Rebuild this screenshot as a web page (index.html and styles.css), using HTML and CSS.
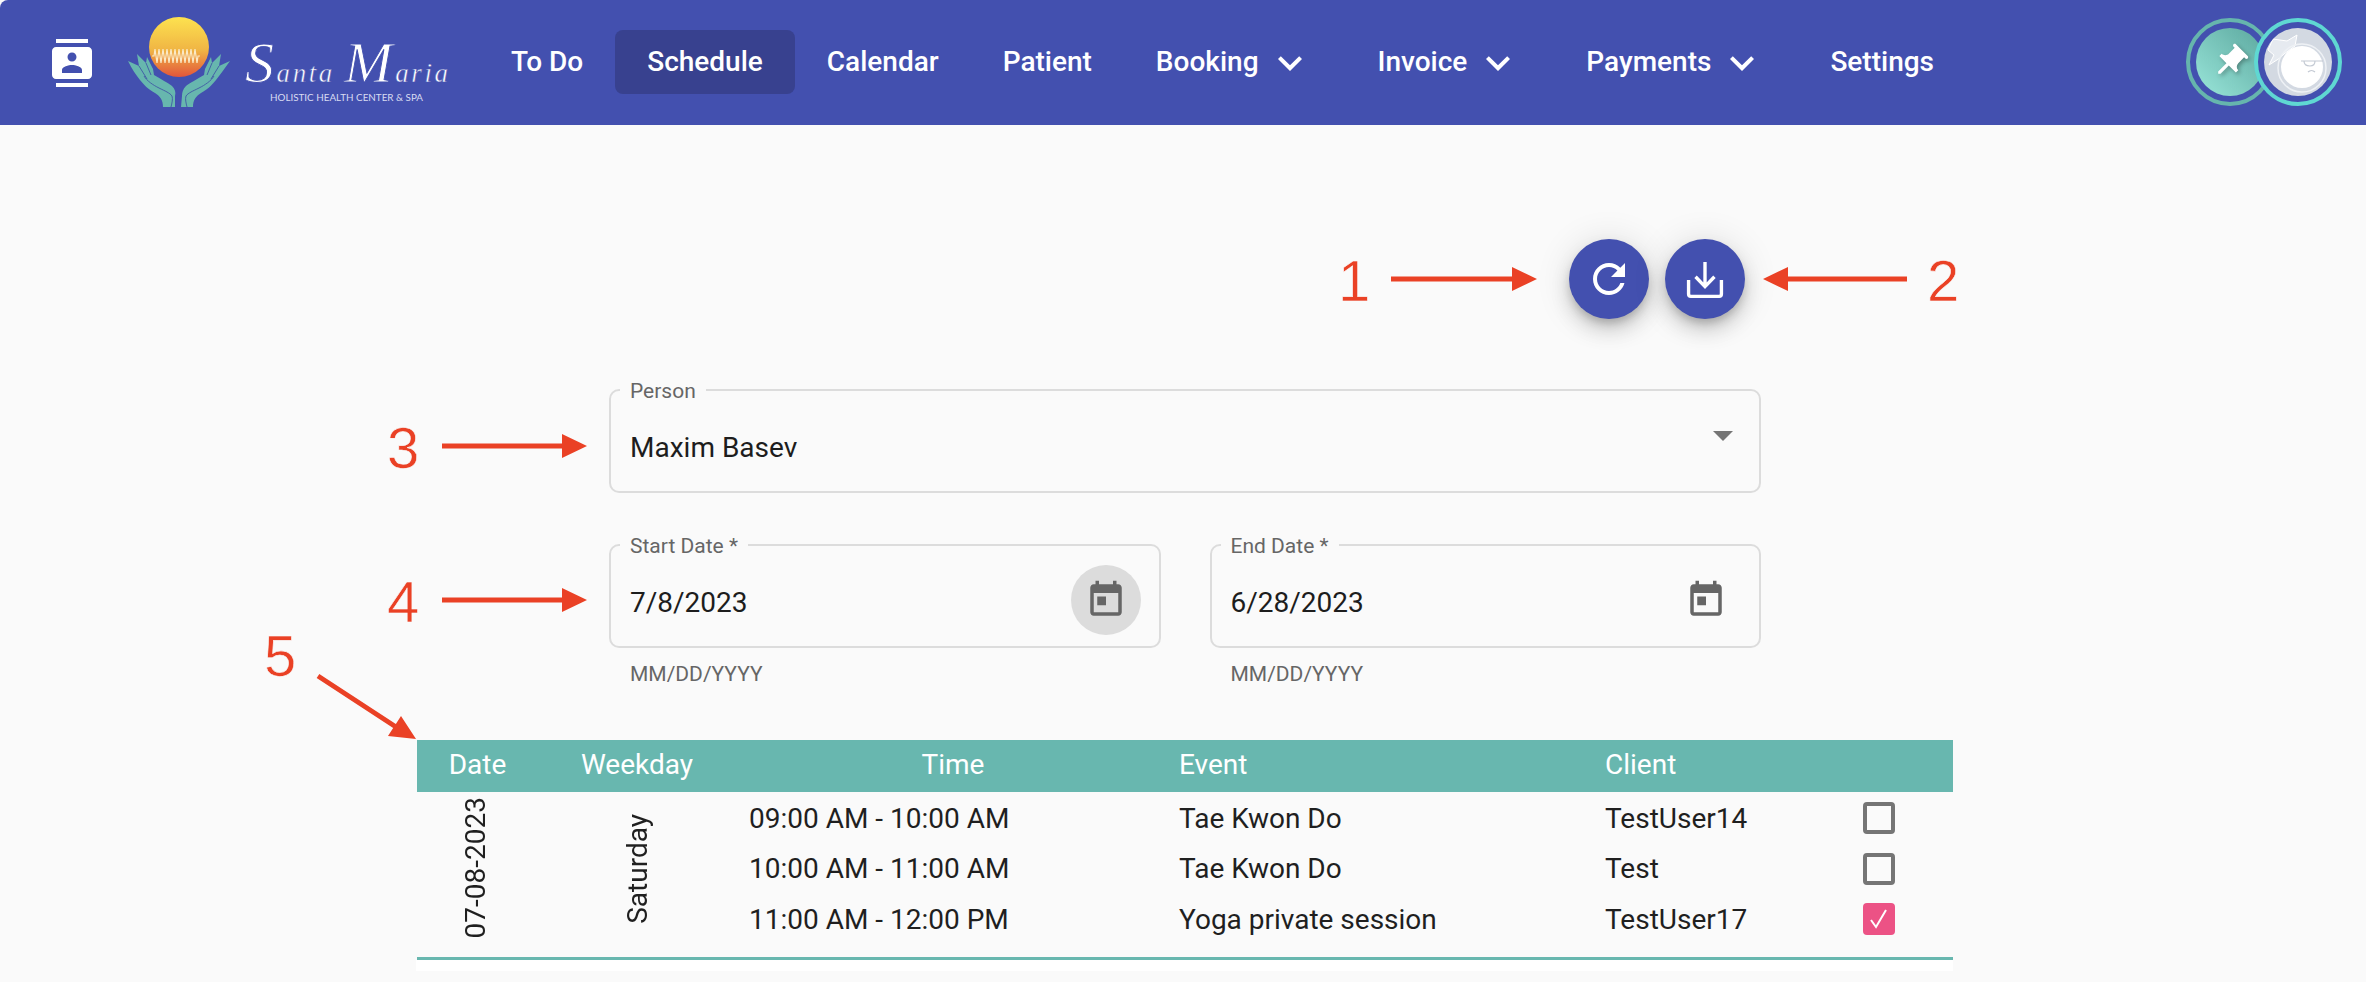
FILE: index.html
```html
<!DOCTYPE html>
<html lang="en">
<head>
<meta charset="utf-8">
<title>Schedule</title>
<link rel="stylesheet" href="styles.css">
</head>
<body>
<header class="topbar">
  <svg class="contacts-icon" viewBox="0 0 24 24"><path d="M20 0H4v2h16V0zM4 24h16v-2H4v2zM20 4H4c-1.1 0-2 .9-2 2v12c0 1.1.9 2 2 2h16c1.1 0 2-.9 2-2V6c0-1.1-.9-2-2-2zm-8 2.75c1.24 0 2.25 1.01 2.25 2.25s-1.01 2.25-2.25 2.25S9.75 10.24 9.75 9 10.76 6.75 12 6.75zM17 17H7v-1.5c0-1.67 3.33-2.5 5-2.5s5 .83 5 2.5V17z"/></svg>
  <svg class="logo" viewBox="0 0 335 126">
    <defs>
      <linearGradient id="sun" x1="0" y1="0" x2="0" y2="1">
        <stop offset="0" stop-color="#fde24f"/>
        <stop offset="0.55" stop-color="#f0b544"/>
        <stop offset="1" stop-color="#e2553a"/>
      </linearGradient>
    </defs>
    <circle cx="59" cy="47" r="30" fill="url(#sun)"/>
    <path class="pulse" d="M32 56h2l1-7 2 14 2-14 2 14 2-14 2 14 2-14 2 14 2-14 2 14 2-14 2 14 2-14 2 14 2-14 2 14 2-14 2 14 2-14 2 14 2-14 2 14 1-7h2"/>
    <path class="hand" d="M8 61L19 66L17 54L26 63L27 57L33 69L34 75C41 79 48 83 52 86C55 89 56 92 55 96L55 107H43C43 100 40 96 35 93C28 89 24 85 20 80C16 75 12 69 8 61Z"/>
    <path class="hand" d="M110 61L99 66L101 54L92 63L91 57L85 69L84 75C77 79 70 83 66 86C63 89 62 92 62 96L61 107H73C73 100 76 96 81 93C88 89 92 85 96 80C100 75 104 69 110 61Z"/>
    <path class="hand-line" d="M19 66L27 79M26 63L31 75M24 76c3 5 9 9 15 12 6 3 11 5 13 8 1 3 0 7-1 11M99 66L91 79M92 63L87 75M94 76c-3 5-9 9-15 12-6 3-11 5-13 8-1 3 0 7 1 11"/>
    <text class="script" x="125" y="82" textLength="203" lengthAdjust="spacing"><tspan class="script-cap">S</tspan>anta <tspan class="script-cap">M</tspan>aria</text>
    <text class="tagline" x="150" y="101" textLength="153" lengthAdjust="spacingAndGlyphs">HOLISTIC HEALTH CENTER &amp; SPA</text>
  </svg>
  <nav class="nav">
    <a class="nav-item">To Do</a>
    <a class="nav-item active">Schedule</a>
    <a class="nav-item">Calendar</a>
    <a class="nav-item">Patient</a>
    <a class="nav-item has-menu">Booking<svg class="chev" viewBox="0 0 24 24"><path d="M16.59 8.59 12 13.17 7.41 8.59 6 10l6 6 6-6z"/></svg></a>
    <a class="nav-item has-menu">Invoice<svg class="chev" viewBox="0 0 24 24"><path d="M16.59 8.59 12 13.17 7.41 8.59 6 10l6 6 6-6z"/></svg></a>
    <a class="nav-item has-menu">Payments<svg class="chev" viewBox="0 0 24 24"><path d="M16.59 8.59 12 13.17 7.41 8.59 6 10l6 6 6-6z"/></svg></a>
    <a class="nav-item">Settings</a>
  </nav>
  <div class="avatars">
    <div class="ring ring-pin">
      <div class="disc disc-pin">
        <svg class="pin" viewBox="0 0 24 24"><path transform="rotate(45 12 12)" d="M16 9V4h1c.55 0 1-.45 1-1s-.45-1-1-1H7c-.55 0-1 .45-1 1s.45 1 1 1h1v5c0 1.66-1.34 3-3 3v2h5.97v7l1 1 1-1v-7H19v-2c-1.66 0-3-1.34-3-3z"/></svg>
      </div>
    </div>
    <div class="ring ring-user">
      <div class="disc disc-user">
        <svg class="face" viewBox="0 0 68 68">
          <path class="crown" d="M4 22l5-11 14 2 10-6-2 11-11 8-4 4-11 7 5-10z"/>
          <circle class="face-edge" cx="38" cy="40" r="24"/>
          <circle class="face-fill" cx="38" cy="39" r="21"/>
          <path class="face-line" d="M37 33h22M40 33c0 4 3 5 6 5s5-2 5-5M44 44c2-2 5-2 7 0"/>
        </svg>
      </div>
    </div>
  </div>
</header>

<main class="page">
  <div class="actions">
    <button class="fab"><svg class="fab-refresh" viewBox="0 0 24 24"><path d="M17.65 6.35C16.2 4.9 14.21 4 12 4c-4.42 0-7.99 3.58-7.99 8s3.57 8 7.99 8c3.73 0 6.84-2.55 7.73-6h-2.08c-.82 2.33-3.04 4-5.65 4-3.31 0-6-2.69-6-6s2.69-6 6-6c1.66 0 3.14.69 4.22 1.78L13 11h7V4l-2.35 2.35z"/></svg></button>
    <button class="fab"><svg class="fab-download" viewBox="0 0 24 24"><path d="M4.7 12.400V18.700a1 1 0 0 0 1 1H18.300a1 1 0 0 0 1-1V12.400M12 4.400V15M7.800 11l4.200 4.400L16.200 11"/></svg></button>
  </div>

  <form class="filters">
    <div class="field field-person">
      <span class="field-label">Person</span>
      <span class="field-value">Maxim Basev</span>
      <span class="caret"></span>
    </div>
    <div class="date-row">
      <div class="date-col">
        <div class="field">
          <span class="field-label">Start Date *</span>
          <span class="field-value">7/8/2023</span>
          <span class="cal-btn hovered"><svg class="cal" viewBox="0 0 24 24"><path d="M19 3h-1V1h-2v2H8V1H6v2H5c-1.11 0-1.99.9-1.99 2L3 19c0 1.1.89 2 2 2h14c1.1 0 2-.9 2-2V5c0-1.1-.9-2-2-2zm0 16H5V8h14v11zM7 10h5v5H7z"/></svg></span>
        </div>
        <p class="helper">MM/DD/YYYY</p>
      </div>
      <div class="date-col">
        <div class="field">
          <span class="field-label">End Date *</span>
          <span class="field-value">6/28/2023</span>
          <span class="cal-btn"><svg class="cal" viewBox="0 0 24 24"><path d="M19 3h-1V1h-2v2H8V1H6v2H5c-1.11 0-1.99.9-1.99 2L3 19c0 1.1.89 2 2 2h14c1.1 0 2-.9 2-2V5c0-1.1-.9-2-2-2zm0 16H5V8h14v11zM7 10h5v5H7z"/></svg></span>
        </div>
        <p class="helper">MM/DD/YYYY</p>
      </div>
    </div>
  </form>

  <table class="schedule">
    <colgroup>
      <col class="c-date"><col class="c-day"><col class="c-time"><col class="c-event"><col class="c-client"><col class="c-check">
    </colgroup>
    <thead>
      <tr>
        <th>Date</th>
        <th>Weekday</th>
        <th>Time</th>
        <th class="left">Event</th>
        <th class="left">Client</th>
        <th></th>
      </tr>
    </thead>
    <tbody>
      <tr>
        <td rowspan="3" class="vertical v-date"><span>07-08-2023</span></td>
        <td rowspan="3" class="vertical v-day"><span>Saturday</span></td>
        <td class="time">09:00 AM - 10:00 AM</td>
        <td class="left">Tae Kwon Do</td>
        <td class="left">TestUser14</td>
        <td class="check"><span class="box"></span></td>
      </tr>
      <tr>
        <td class="time">10:00 AM - 11:00 AM</td>
        <td class="left">Tae Kwon Do</td>
        <td class="left">Test</td>
        <td class="check"><span class="box"></span></td>
      </tr>
      <tr>
        <td class="time">11:00 AM - 12:00 PM</td>
        <td class="left">Yoga private session</td>
        <td class="left">TestUser17</td>
        <td class="check"><span class="box checked"><svg viewBox="0 0 32 32"><path d="M8 17l5 7L23 7"/></svg></span></td>
      </tr>
    </tbody>
  </table>
  <div class="table-foot"></div>
</main>

<div class="notes">
  <span class="num n1">1</span>
  <span class="num n2">2</span>
  <span class="num n3">3</span>
  <span class="num n4">4</span>
  <span class="num n5">5</span>
  <svg class="arrows" viewBox="0 0 2366 982">
    <path d="M1391 276.500h121V267l25 12-25 12v-9.500h-121z"/>
    <path d="M1907 276.500h-119V267l-25 12 25 12v-9.500h119z"/>
    <path d="M442 443.500h120V434l25 12-25 12v-9.500H442z"/>
    <path d="M442 597.500h120V588l25 12-25 12v-9.500H442z"/>
    <path d="M319.350 673.900L395.850 723.900L401 716L416 739L388 736L393.150 728.100L316.650 678.100Z"/>
  </svg>
</div>
</body>
</html>
```
FILE: styles.css
```css
* { box-sizing: border-box; }

html, body {
  margin: 0;
  height: 982px;
  overflow: hidden;
  background: #fafafa;
  font-family: Roboto, "Liberation Sans", sans-serif;
  color: #1f1f1f;
}

body { position: relative; width: 2366px; }

/* top bar */
.topbar {
  height: 125px;
  display: flex;
  align-items: center;
  background: #4350af;
  border-top-left-radius: 8px;
  padding-right: 24px;
}

.contacts-icon {
  width: 48px;
  height: 48px;
  margin-left: 48px;
  fill: #fff;
  flex: none;
}

.logo {
  width: 335px;
  height: 126px;
  margin-left: 24px;
  flex: none;
}

.pulse { fill: none; stroke: #fbe9c4; stroke-width: 1.2; }
.hand { fill: #67b7ae; }
.hand-line { fill: none; stroke: #3f58a5; stroke-width: .9; }

.script {
  font-family: "Liberation Serif", serif;
  font-style: italic;
  font-size: 27px;
  fill: #fff;
  stroke: #4350af;
  stroke-width: .5;
}

.script-cap { font-size: 58px; stroke-width: .9; }

.tagline {
  font-family: Lato, sans-serif;
  font-size: 9px;
  fill: #d9dcf2;
}

.nav {
  display: flex;
  align-items: center;
  margin-left: 24px;
  margin-top: -2px;
}

.nav-item {
  display: flex;
  align-items: center;
  height: 64px;
  padding: 0 32px;
  border-radius: 8px;
  color: #fff;
  font-size: 28px;
  font-weight: 500;
  white-space: nowrap;
}

.nav-item.active { background: #38418f; }

.chev {
  width: 48px;
  height: 48px;
  margin-left: 7px;
  margin-top: 2px;
  fill: #fff;
}

.avatars {
  display: flex;
  margin-left: auto;
  margin-top: -1px;
}

.ring {
  width: 88px;
  height: 88px;
  border-radius: 50%;
  padding: 6px;
  border: 4px solid;
}

.ring-pin { border-color: #66b5ad; }
.ring-user {
  border-color: #5fd8d2;
  background: #4350af;
  margin-left: -20px;
  position: relative;
}

.disc {
  width: 68px;
  height: 68px;
  border-radius: 50%;
  display: flex;
  align-items: center;
  justify-content: center;
  overflow: hidden;
}

.disc-pin { background: linear-gradient(45deg, #9ae6da, #5ba79e); }
.disc-user { background: #d3d9e2; }

.pin { width: 40px; height: 40px; fill: #fff; filter: drop-shadow(2px 2px 2px rgba(0,0,0,.3)); }
.face { width: 68px; height: 68px; }
.crown { fill: #e6eaf0; stroke: #fff; stroke-width: 1; }
.face-edge { fill: none; stroke: #eef1f5; stroke-width: 1.5; }
.face-fill { fill: #fff; }
.face-line { fill: none; stroke: #c3c9d3; stroke-width: 1.2; }

/* page */
.page {
  margin-left: 416px;
  width: 1537px;
}

.actions {
  display: flex;
  justify-content: flex-end;
  gap: 16px;
  padding: 114px 208px 0 0;
}

.fab {
  width: 80px;
  height: 80px;
  padding: 0;
  border: 0;
  border-radius: 50%;
  background: #4350af;
  display: flex;
  align-items: center;
  justify-content: center;
  box-shadow: 0 6px 10px -2px rgba(0,0,0,.2), 0 12px 20px 0 rgba(0,0,0,.14), 0 2px 36px 0 rgba(0,0,0,.12);
}

.fab-refresh { width: 48px; height: 48px; fill: #fff; }
.fab-download { width: 54px; height: 54px; fill: none; stroke: #fff; stroke-width: 1.5; }

.filters {
  margin: 70px 0 0 193px;
  width: 1152px;
}

.field {
  position: relative;
  height: 104px;
  border: 2px solid #dcdcdc;
  border-radius: 10px;
  display: flex;
  align-items: center;
  padding-left: 19px;
}

.field-label {
  position: absolute;
  left: 9px;
  top: -10px;
  padding: 0 10px;
  background: #fafafa;
  font-size: 21px;
  line-height: 20px;
  height: 20px;
  color: #666;
}

.field-value {
  margin-top: 13px;
  font-size: 28px;
  color: #1d1d1d;
}

.caret {
  margin-left: auto;
  margin-right: 26px;
  margin-top: -10px;
  width: 0;
  height: 0;
  border-left: 10px solid transparent;
  border-right: 10px solid transparent;
  border-top: 10px solid #757575;
}

.date-row {
  display: flex;
  gap: 49px;
  margin-top: 51px;
}

.date-col { flex: 1; }

.cal-btn {
  margin-left: auto;
  margin-right: 18px;
  margin-top: 7px;
  width: 70px;
  height: 70px;
  border-radius: 50%;
  display: flex;
  align-items: center;
  justify-content: center;
}

.cal-btn.hovered { background: #dcdcdc; }
.cal { width: 42px; height: 42px; fill: #666; }

.helper {
  margin: 14px 0 0 21px;
  font-size: 21px;
  line-height: 24px;
  color: #666;
}

/* table */
.schedule {
  margin: 54px 0 0 1px;
  width: 1536px;
  table-layout: fixed;
  border-collapse: collapse;
  font-size: 28px;
}

.c-date { width: 121px; }
.c-day { width: 198px; }
.c-time { width: 434px; }
.c-event { width: 426px; }
.c-client { width: 254px; }
.c-check { width: 103px; }

.schedule th {
  height: 52px;
  padding: 0 0 3px;
  background: #68b7af;
  color: #fff;
  font-weight: 400;
  text-align: center;
}

.schedule th.left { text-align: left; padding-left: 9px; }
.schedule td.left { text-align: left; padding-left: 9px; }

.schedule td {
  height: 51px;
  padding: 2px 0 0;
  white-space: nowrap;
}

.schedule tbody tr:first-child td { height: 50px; }
.schedule tbody tr:last-child td { height: 65px; padding-bottom: 13px; }

.schedule tbody { border-bottom: 3px solid #68b7af; }

.schedule td.vertical { text-align: center; vertical-align: middle; }
.schedule td.v-date { padding: 0 5px 6px 0; }
.schedule td.v-day { padding: 0 0 3px; }

.vertical span {
  display: inline-block;
  writing-mode: vertical-rl;
  transform: rotate(180deg);
}

.schedule td.time { padding-left: 13px; }
.schedule td.check { padding-left: 13px; }

.box {
  display: block;
  width: 32px;
  height: 32px;
  border: 4px solid #757575;
  border-radius: 4px;
}

.box.checked {
  border: 0;
  background: #ec5285;
}

.box svg { display: block; width: 32px; height: 32px; fill: none; stroke: #fff; stroke-width: 2; }

.table-foot { height: 11px; background: #fff; }

/* annotation layer */
.notes { position: absolute; inset: 0; pointer-events: none; }
.arrows { position: absolute; inset: 0; width: 2366px; height: 982px; fill: #ea4125; }

.num {
  position: absolute;
  font-family: "Liberation Sans", sans-serif;
  font-size: 58px;
  line-height: 66px;
  color: #ea4125;
  -webkit-text-stroke: .6px #fafafa;
}

.n1 { left: 1338px; top: 248px; }
.n2 { left: 1927px; top: 248px; }
.n3 { left: 387px; top: 415px; }
.n4 { left: 387px; top: 569px; }
.n5 { left: 264px; top: 623px; }
```
